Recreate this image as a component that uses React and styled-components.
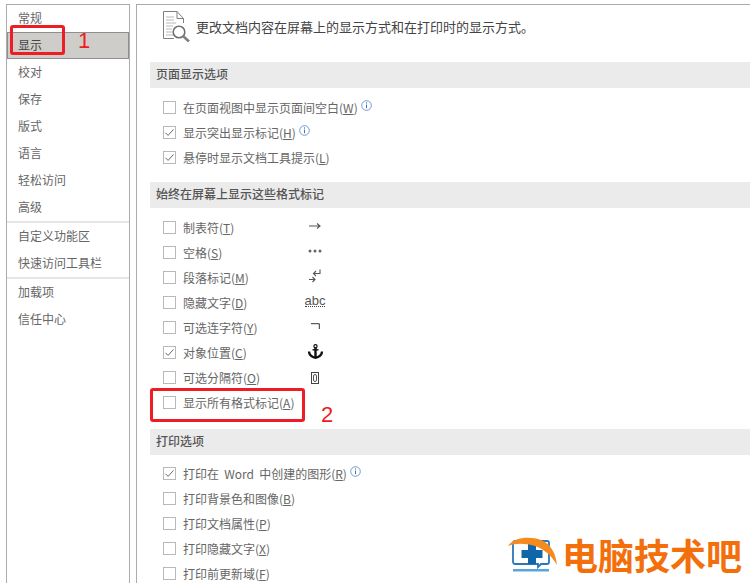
import React from "react";
import styled, { createGlobalStyle } from "styled-components";

const GlobalStyle = createGlobalStyle`
  html, body {
    margin: 0;
    padding: 0;
    background: #fff;
  }
  body {
    font-family: "Noto Sans CJK SC", "Liberation Sans", sans-serif;
    overflow: hidden;
  }
`;

const navGroups = [
  ["常规", "显示", "校对", "保存", "版式", "语言", "轻松访问", "高级"],
  ["自定义功能区", "快速访问工具栏"],
  ["加载项", "信任中心"],
];

const sections = [
  {
    title: "页面显示选项",
    top: 7,
    bottom: 12,
    rows: [
      { label: "在页面视图中显示页面间空白", key: "W", info: true },
      { label: "显示突出显示标记", key: "H", checked: true, info: true },
      { label: "悬停时显示文档工具提示", key: "L", checked: true },
    ],
  },
  {
    title: "始终在屏幕上显示这些格式标记",
    top: 7,
    bottom: 14,
    rows: [
      { label: "制表符", key: "T", mark: "tab" },
      { label: "空格", key: "S", mark: "space" },
      { label: "段落标记", key: "M", mark: "para" },
      { label: "隐藏文字", key: "D", mark: "hidden" },
      { label: "可选连字符", key: "Y", mark: "hyphen" },
      { label: "对象位置", key: "C", checked: true, mark: "anchor" },
      { label: "可选分隔符", key: "O", mark: "break" },
      { label: "显示所有格式标记", key: "A" },
    ],
  },
  {
    title: "打印选项",
    top: 6,
    bottom: 0,
    rows: [
      { label: "打印在 Word 中创建的图形", key: "R", checked: true, info: true },
      { label: "打印背景色和图像", key: "B" },
      { label: "打印文档属性", key: "P" },
      { label: "打印隐藏文字", key: "X" },
      { label: "打印前更新域", key: "F" },
    ],
  },
];

const DocIcon = () => (
  <svg width="27" height="31" viewBox="0 0 27 31" fill="none">
    <path d="M14 .5H.5v27H11M14 .5l6.5 7V12" stroke="#808080" />
    <path d="M14 .5v7h6.5" stroke="#808080" />
    <path d="M3 6h8M3 9h8M3 12h10M3 15h7M3 18h6M3 21h6M3 24h7" stroke="#b8b8b8" />
    <circle cx="16" cy="21" r="5.8" stroke="#6e6e6e" strokeWidth="1.6" fill="#fff" />
    <path d="M20.5 25.5l5.5 5" stroke="#808080" strokeWidth="2.6" />
  </svg>
);

const InfoIcon = () => (
  <svg width="11" height="11" viewBox="0 0 11 11" fill="none">
    <circle cx="5.5" cy="5.5" r="4.8" stroke="#6f9bd8" />
    <path d="M5.5 4.6v3.6" stroke="#3f6fb5" />
    <path d="M5.5 2.4v1.2" stroke="#3f6fb5" />
  </svg>
);

const CheckIcon = () => (
  <svg width="11" height="11" viewBox="0 0 11 11" fill="none">
    <path d="M1.5 5.8l2.6 2.6 5.4-6" stroke="#6a6a6a" />
  </svg>
);

const marks = {
  tab: (
    <svg width="12" height="8" viewBox="0 0 12 8" fill="none">
      <path d="M0 4h11M8 1.5l3 2.5-3 2.5" stroke="#555" strokeWidth="1.1" />
    </svg>
  ),
  space: (
    <svg width="14" height="4" viewBox="0 0 14 4" fill="#666">
      <circle cx="2" cy="2" r="1.5" />
      <circle cx="7" cy="2" r="1.5" />
      <circle cx="12" cy="2" r="1.5" />
    </svg>
  ),
  para: (
    <svg width="12" height="14" viewBox="0 0 12 14" fill="none">
      <path d="M11 .5v4H4.5M7 2l-2.5 2.5L7 7" stroke="#555" strokeWidth="1.1" />
      <path d="M0 10.5h6M3.5 8l2.5 2.5L3.5 13" stroke="#555" strokeWidth="1.1" />
    </svg>
  ),
  hyphen: (
    <svg width="9" height="6" viewBox="0 0 9 6" fill="none">
      <path d="M0 .7h8.3V6" stroke="#333" />
    </svg>
  ),
  anchor: (
    <svg width="15" height="15" viewBox="0 0 15 15" fill="none">
      <circle cx="7.5" cy="2.2" r="1.6" stroke="#111" strokeWidth="1.2" />
      <path d="M7.5 3.5v10.5" stroke="#111" strokeWidth="2.4" />
      <path d="M4.5 5.8h6" stroke="#111" strokeWidth="1.4" />
      <path d="M1 7.5c.2 3.8 3 5.6 6.5 6.2 3.5-.6 6.3-2.4 6.5-6.2" stroke="#111" strokeWidth="2.4" />
    </svg>
  ),
  break: (
    <svg width="8" height="15" viewBox="0 0 8 15" fill="none">
      <rect x=".5" y="3.5" width="7" height="11" stroke="#444" />
      <rect x="2.5" y="5.5" width="3" height="7" rx="1.5" stroke="#555" />
    </svg>
  ),
};

const LogoIcon = () => (
  <svg width="50" height="35" viewBox="0 0 50 35" fill="none">
    <path d="M7 4h32a2 2 0 0 1 2 2v19a2 2 0 0 1-2 2H33l-3 3v-3H7a2 2 0 0 1-2-2V6a2 2 0 0 1 2-2z" stroke="#2a77bb" strokeWidth="1.8" fill="#fff" />
    <path d="M5 32h36v2.5H5z" fill="#5aa5dc" />
    <path d="M20 7h8v6h6.5v8H28v6h-8v-6h-6.5v-8H20z" fill="#0f66a8" />
    <path d="M0 9C6 0 22-1 33 3c10 4 15 14 16 25-5-9-13-16-22-19C17 6 7 6 0 9z" fill="#f58a1f" />
  </svg>
);

const Page = styled.div`
  display: flex;
  gap: 6px;
  width: 750px;
  height: 583px;
  padding: 4px 0 0 6px;
  box-sizing: border-box;
  position: relative;
  overflow: hidden;
`;

const Sidebar = styled.nav`
  width: 124px;
  flex: none;
  box-sizing: border-box;
  border: 1px solid #ababab;
  margin-bottom: -10px;
`;

const NavGroup = styled.div`
  & + & {
    border-top: 2px solid #e6e6e6;
  }
`;

const NavItem = styled.div`
  height: 27px;
  line-height: 25px;
  box-sizing: border-box;
  padding-left: 11px;
  font-size: 12px;
  color: ${(props) => (props.$active ? "#444" : "#666")};
  background: ${(props) => (props.$active ? "#cfcdc9" : "transparent")};
  outline: ${(props) => (props.$active ? "1px solid #8f8f8f" : "none")};
  outline-offset: -1px;
`;

const Main = styled.main`
  flex: 1;
  border-left: 1px solid #ababab;
  border-top: 1px solid #ababab;
  padding-left: 13px;
`;

const Intro = styled.div`
  display: flex;
  align-items: center;
  gap: 6px;
  height: 57px;
  box-sizing: border-box;
  padding: 0 0 14px 13px;
  font-size: 13px;
  color: #444;
`;

const SectionHeader = styled.div`
  height: 26px;
  line-height: 23px;
  background: #ebebeb;
  padding-left: 6px;
  font-size: 12px;
  font-weight: 500;
  color: #555;
`;

const Rows = styled.div`
  padding: ${(props) => props.$top}px 0 ${(props) => props.$bottom}px 13px;
`;

const Row = styled.div`
  display: flex;
  align-items: center;
  height: 25px;
  font-size: 12px;
  color: #666;
  white-space: pre;
`;

const CheckBox = styled.span`
  width: 13px;
  height: 13px;
  flex: none;
  box-sizing: border-box;
  border: 1px solid #b9b9b9;
  margin-right: 7px;
  display: flex;
  align-items: center;
  justify-content: center;
`;

const Label = styled.span`
  width: ${(props) => (props.$fixed ? "122px" : "auto")};
  flex: none;
  word-spacing: 2.5px;
`;

const InfoWrap = styled.span`
  display: flex;
  margin: -4px 0 0 3px;
`;

const Mark = styled.span`
  width: 20px;
  display: flex;
  justify-content: center;
  align-items: center;
  padding-bottom: 3px;
  color: #555;
`;

const AbcMark = styled.span`
  font-family: "Liberation Sans", sans-serif;
  font-size: 13px;
  line-height: 10px;
  border-bottom: 1px dotted #444;
`;

const Callout = styled.div`
  position: absolute;
  box-sizing: border-box;
  border: 3px solid #ee1c25;
  border-radius: 3px;
  left: ${(props) => props.$x}px;
  top: ${(props) => props.$y}px;
  width: ${(props) => props.$w}px;
  height: ${(props) => props.$h}px;
`;

const CalloutNumber = styled.div`
  position: absolute;
  left: ${(props) => props.$x}px;
  top: ${(props) => props.$y}px;
  font-family: "Liberation Sans", sans-serif;
  font-size: 22px;
  line-height: 22px;
  color: #ee1c25;
`;

const Watermark = styled.div`
  position: absolute;
  left: 508px;
  top: 532px;
  display: flex;
  align-items: center;
  gap: 4px;
`;

const WatermarkText = styled.span`
  font-size: 36px;
  font-weight: 700;
  line-height: 44px;
  color: #f36f0c;
`;

const App = () => (
  <Page>
    <GlobalStyle />
    <Sidebar>
      {navGroups.map((group) => (
        <NavGroup key={group[0]}>
          {group.map((item) => (
            <NavItem key={item} $active={item === "显示"}>
              {item}
            </NavItem>
          ))}
        </NavGroup>
      ))}
    </Sidebar>
    <Main>
      <Intro>
        <DocIcon />
        更改文档内容在屏幕上的显示方式和在打印时的显示方式。
      </Intro>
      {sections.map((section) => (
        <section key={section.title}>
          <SectionHeader>{section.title}</SectionHeader>
          <Rows $top={section.top} $bottom={section.bottom}>
            {section.rows.map((row) => (
              <Row key={row.key}>
                <CheckBox>{row.checked && <CheckIcon />}</CheckBox>
                <Label $fixed={!!row.mark}>
                  {row.label}(<u>{row.key}</u>)
                </Label>
                {row.info && (
                  <InfoWrap>
                    <InfoIcon />
                  </InfoWrap>
                )}
                {row.mark && (
                  <Mark>{row.mark === "hidden" ? <AbcMark>abc</AbcMark> : marks[row.mark]}</Mark>
                )}
              </Row>
            ))}
          </Rows>
        </section>
      ))}
    </Main>
    <Callout $x={10} $y={25} $w={55} $h={30} />
    <CalloutNumber $x={78} $y={30}>1</CalloutNumber>
    <Callout $x={150} $y={388} $w={155} $h={34} />
    <CalloutNumber $x={321} $y={404}>2</CalloutNumber>
    <Watermark>
      <LogoIcon />
      <WatermarkText>电脑技术吧</WatermarkText>
    </Watermark>
  </Page>
);

export default App;
